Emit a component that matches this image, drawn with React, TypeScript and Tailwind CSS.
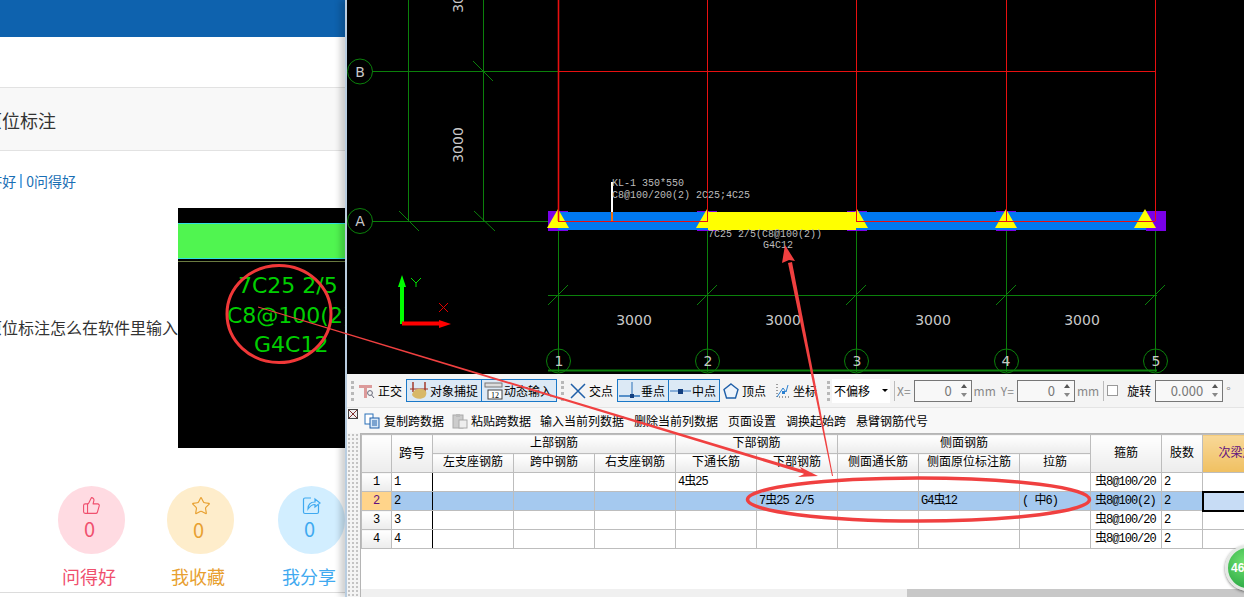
import { Star, ThumbsUp } from "lucide-react"

const cadGreen = "#0b800b"
const cadRed = "#e81010"
const axisX = [558, 707, 856, 1006, 1155]

function Grip() {
    return <div className="h-[20px] w-[3px] shrink-0 border-l-[3px] border-dotted border-[#b8b8b8]"></div>
}

function Triangle({ x }: { x: number }) {
    return <polygon points={`${x},209 ${x + 11},228 ${x - 11},228`} fill="#ffff00" />
}

function CadView() {
    return (
        <svg viewBox="347 0 897 374" className="block h-[374px] w-[897px] bg-black">
            <line x1="408.5" y1="0" x2="408.5" y2="221" stroke={cadGreen} />
            <line x1="483.5" y1="0" x2="483.5" y2="221" stroke={cadGreen} />
            <line x1="372" y1="71.5" x2="558" y2="71.5" stroke={cadGreen} />
            <line x1="372" y1="221.5" x2="558" y2="221.5" stroke={cadGreen} />
            <line x1="473" y1="61" x2="493" y2="81" stroke={cadGreen} />
            <line x1="399" y1="211" x2="419" y2="231" stroke={cadGreen} />
            <line x1="474" y1="211" x2="495" y2="231" stroke={cadGreen} />
            {axisX.map((x) => (
                <g key={x}>
                    <line x1={x + 0.5} y1="221" x2={x + 0.5} y2="372" stroke={cadGreen} />
                    <line x1={x - 10} y1="305" x2={x + 10} y2="285" stroke={cadGreen} />
                    <circle cx={x + 0.5} cy="361" r="12" fill="none" stroke={cadGreen} />
                </g>
            ))}
            <line x1="548" y1="295.5" x2="1157" y2="295.5" stroke={cadGreen} />
            <line x1="548" y1="370.5" x2="1157" y2="370.5" stroke={cadGreen} strokeWidth="2" />
            <circle cx="360" cy="71.5" r="12.5" fill="none" stroke={cadGreen} />
            <circle cx="360" cy="221" r="12.5" fill="none" stroke={cadGreen} />

            {/* columns sit under the beam, only the two end ones show */}
            <rect x="548" y="211" width="20" height="20" fill="#7a00e8" />
            <rect x="697" y="211" width="20" height="20" fill="#7a00e8" />
            <rect x="847" y="211" width="20" height="20" fill="#7a00e8" />
            <rect x="996" y="211" width="20" height="20" fill="#7a00e8" />
            <rect x="558" y="212" width="588" height="18" fill="#0078f0" />
            <rect x="1146" y="211" width="20" height="20" fill="#7a00e8" />
            <Triangle x={558} />
            <Triangle x={707} />
            <Triangle x={857} />
            <Triangle x={1006} />
            <Triangle x={1145} />

            {axisX.map((x, i) => (
                <line key={x} x1={x + 0.5} y1="0" x2={x + 0.5} y2="221" stroke={cadRed} strokeWidth={i === 0 ? 1.6 : 1} />
            ))}
            <line x1="558" y1="71.5" x2="1155" y2="71.5" stroke={cadRed} />
            <line x1="558" y1="221.5" x2="1155" y2="221.5" stroke={cadRed} />
            <rect x="708" y="212" width="148" height="18" fill="#ffff00" />

            <rect x="611" y="182" width="2" height="30" fill="#ffffff" />
            <rect x="611" y="212" width="2" height="9" fill="#f07010" />

            <g fontFamily="'Liberation Mono', monospace" fontSize="10" fill="#bcbcbc">
                <text x="612" y="186">KL-1 350*550</text>
                <text x="612" y="198">C8@100/200(2) 2C25;4C25</text>
                <text x="708" y="237">7C25 2/5(C8@100(2))</text>
                <text x="763" y="248">G4C12</text>
            </g>
            <g fontFamily="'DejaVu Sans', sans-serif" fontSize="14" fill="#c8c8c8" textAnchor="middle">
                <text x="634" y="325">3000</text>
                <text x="783" y="325">3000</text>
                <text x="933" y="325">3000</text>
                <text x="1082" y="325">3000</text>
                <text transform="translate(463,145) rotate(-90)">3000</text>
                <text transform="translate(463,-5) rotate(-90)">3000</text>
                <text x="360" y="77">B</text>
                <text x="360" y="226">A</text>
                <text x="559" y="366">1</text>
                <text x="708" y="366">2</text>
                <text x="857" y="366">3</text>
                <text x="1006" y="366">4</text>
                <text x="1156" y="366">5</text>
            </g>

            <line x1="402" y1="284" x2="402" y2="324" stroke="#00ff00" strokeWidth="4" />
            <polygon points="402,275 406,287 398,287" fill="#00ff00" />
            <path d="M411 278 L416 283 L421 278 M416 283 L416 287" fill="none" stroke="#00dd00" />
            <line x1="402" y1="323.5" x2="442" y2="323.5" stroke="#ff0000" strokeWidth="4" />
            <polygon points="451,324 439,320 439,328" fill="#ff0000" />
            <path d="M439 303 L448 312 M448 303 L439 312" fill="none" stroke="#e00000" />
        </svg>
    )
}

function ToolText({ children, className }: { children: string; className?: string }) {
    return <span className={`whitespace-nowrap text-[12px] leading-none text-black ${className ?? ""}`}>{children}</span>
}

function Spin({ value, width }: { value: string; width: string }) {
    return (
        <div className={`flex h-[22px] shrink-0 items-center border border-[#777] bg-[#f8f8f8] ${width}`}>
            <span className="flex-1 text-right text-[13px] text-[#777]">{value}</span>
            <div className="ml-[9px] mr-[4px] flex flex-col gap-[5px]">
                <div className="h-0 w-0 border-x-[3px] border-b-[4px] border-x-transparent border-b-[#555]"></div>
                <div className="h-0 w-0 border-x-[3px] border-t-[4px] border-x-transparent border-t-[#888]"></div>
            </div>
        </div>
    )
}

function SnapButton({ children, width }: { children: React.ReactNode; width: string }) {
    return (
        <div className={`-mr-[1px] flex h-[23px] shrink-0 items-center border border-[#1a78c8] bg-[#dce9f5] ${width}`}>
            {children}
        </div>
    )
}

function TopToolbar() {
    return (
        <div className="flex h-[33px] items-center bg-[#f4f4f4] pl-[4px] text-[12px]">
            <Grip />
            <svg width="18" height="18" viewBox="0 0 18 18" className="ml-[4px] shrink-0">
                <path d="M1 3 H14 V6 H9 V16 H6 V6 H1 Z" fill="#dc9a9a" />
                <circle cx="12" cy="11" r="2.4" fill="none" stroke="#667" />
                <line x1="13.6" y1="13" x2="16" y2="16" stroke="#667" />
            </svg>
            <ToolText className="ml-[2px]">正交</ToolText>
            <div className="ml-[4px] flex">
                <SnapButton width="w-[76px]">
                    <svg width="20" height="20" viewBox="0 0 20 20" className="ml-[2px] shrink-0">
                        <path d="M4 1 V11 M16 1 V11" stroke="#a03020" strokeWidth="1.4" />
                        <path d="M1 8 H19" stroke="#a03020" />
                        <path d="M3 14 C4 9 9 7 12 8 C17 8 19 12 16 16 C12 19 5 18 3 14 Z" fill="#d8b868" />
                    </svg>
                    <ToolText className="ml-[1px]">对象捕捉</ToolText>
                </SnapButton>
                <SnapButton width="w-[76px]">
                    <svg width="20" height="18" viewBox="0 0 20 18" className="ml-[2px] shrink-0">
                        <rect x="1" y="1" width="17" height="4" fill="#ddd" stroke="#777" />
                        <rect x="4" y="8" width="14" height="9" fill="#fff" stroke="#444" />
                        <text x="11" y="16" fontSize="8" textAnchor="middle" fill="#000" fontFamily="'Liberation Serif', serif">12</text>
                    </svg>
                    <ToolText>动态输入</ToolText>
                </SnapButton>
            </div>
            <div className="ml-[5px]"><Grip /></div>
            <svg width="16" height="16" viewBox="0 0 16 16" className="ml-[6px] shrink-0">
                <path d="M1 1 L15 15 M15 1 L1 15" stroke="#1f5fa8" strokeWidth="1.5" />
            </svg>
            <ToolText className="ml-[3px]">交点</ToolText>
            <div className="ml-[4px] flex">
                <SnapButton width="w-[52px]">
                    <svg width="21" height="18" viewBox="0 0 21 18" className="ml-[1px] shrink-0">
                        <path d="M0 14 H21" stroke="#2a70b8" strokeWidth="1.5" />
                        <path d="M13 0 V14" stroke="#2a70b8" />
                        <rect x="11" y="12" width="4" height="4" fill="#123f80" />
                    </svg>
                    <ToolText className="ml-[1px]">垂点</ToolText>
                </SnapButton>
                <SnapButton width="w-[52px]">
                    <svg width="21" height="10" viewBox="0 0 21 10" className="ml-[1px] shrink-0">
                        <path d="M0 5 H21" stroke="#6a9ad0" strokeWidth="1.5" />
                        <rect x="8" y="3" width="5" height="5" fill="#123f80" />
                    </svg>
                    <ToolText className="ml-[1px]">中点</ToolText>
                </SnapButton>
            </div>
            <svg width="16" height="16" viewBox="0 0 16 16" className="ml-[4px] shrink-0">
                <polygon points="8,1 15,6.5 12.5,15 3.5,15 1,6.5" fill="#eef4fb" stroke="#1f5fa8" strokeWidth="1.4" />
            </svg>
            <ToolText className="ml-[3px]">顶点</ToolText>
            <svg width="18" height="18" viewBox="0 0 18 18" className="ml-[6px] shrink-0">
                <path d="M5 2 V15 H17" stroke="#444" strokeDasharray="1 2" fill="none" />
                <path d="M5 15 L11 6 L14 10 L16 3" stroke="#2a80d0" fill="none" />
                <rect x="10" y="9" width="3" height="3" fill="#2a80d0" />
            </svg>
            <ToolText className="ml-[3px]">坐标</ToolText>
            <div className="ml-[10px]"><Grip /></div>
            <div className="ml-[2px] flex h-[24px] w-[58px] shrink-0 items-center justify-between bg-white pl-[2px] pr-[2px]">
                <ToolText>不偏移</ToolText>
                <div className="h-0 w-0 border-x-[3px] border-t-[3px] border-x-transparent border-t-black"></div>
            </div>
            <div className="ml-[4px] h-[20px] w-[1px] shrink-0 bg-[#bbb]"></div>
            <span className="ml-[2px] text-[#888]">X=</span>
            <div className="ml-[3px]"><Spin value="0" width="w-[58px]" /></div>
            <span className="ml-[2px] text-[#888]">mm</span>
            <span className="ml-[5px] text-[#888]">Y=</span>
            <div className="ml-[3px]"><Spin value="0" width="w-[58px]" /></div>
            <span className="ml-[2px] text-[#888]">mm</span>
            <div className="ml-[4px] h-[20px] w-[1px] shrink-0 bg-[#bbb]"></div>
            <div className="ml-[3px] h-[11px] w-[11px] shrink-0 border border-[#999] bg-white"></div>
            <ToolText className="ml-[9px]">旋转</ToolText>
            <div className="ml-[4px]"><Spin value="0.000" width="w-[68px]" /></div>
            <span className="ml-[3px] text-[#888]">°</span>
        </div>
    )
}

function SecondToolbar() {
    return (
        <div className="flex h-[26px] items-center border-t border-[#e4e4e4] bg-[#f8f8f8] pl-[1px]">
            <div className="mb-[14px] flex h-[10px] w-[10px] shrink-0 items-center justify-center border border-[#444] bg-[#eee]">
                <svg width="8" height="8" viewBox="0 0 8 8"><path d="M0 0 L8 8 M8 0 L0 8" stroke="#803030" /></svg>
            </div>
            <svg width="16" height="16" viewBox="0 0 16 16" className="ml-[6px] shrink-0">
                <rect x="1" y="1" width="8" height="10" fill="#fff" stroke="#2a70b8" />
                <rect x="6" y="5" width="9" height="10" fill="#d8e8f8" stroke="#1f5fa8" />
                <path d="M8 8 H13 M8 10 H13 M8 12 H13" stroke="#1f5fa8" />
            </svg>
            <ToolText className="ml-[4px]">复制跨数据</ToolText>
            <svg width="16" height="16" viewBox="0 0 16 16" className="ml-[8px] shrink-0">
                <rect x="1" y="2" width="10" height="13" fill="#ccc" stroke="#aaa" />
                <rect x="4" y="1" width="4" height="3" fill="#bbb" />
                <rect x="7" y="7" width="8" height="8" fill="#eee" stroke="#aaa" />
            </svg>
            <ToolText className="ml-[3px] text-[#9a9a9a]">粘贴跨数据</ToolText>
            <ToolText className="ml-[9px]">输入当前列数据</ToolText>
            <ToolText className="ml-[10px]">删除当前列数据</ToolText>
            <ToolText className="ml-[10px]">页面设置</ToolText>
            <ToolText className="ml-[10px]">调换起始跨</ToolText>
            <ToolText className="ml-[10px]">悬臂钢筋代号</ToolText>
        </div>
    )
}

type Row = {
    no: string
    bottomLong?: string
    bottom?: string
    sideOrigin?: string
    tie?: string
    stirrup: string
}

const rows: Row[] = [
    { no: "1", bottomLong: "4虫25", stirrup: "虫8@100/20" },
    { no: "2", bottom: "7虫25 2/5", sideOrigin: "G4虫12", tie: "( 中6)", stirrup: "虫8@100(2)" },
    { no: "3", stirrup: "虫8@100/20" },
    { no: "4", stirrup: "虫8@100/20" },
]

const colWidths = ["w-[30px]", "w-[41px]", "w-[81px]", "w-[81px]", "w-[81px]", "w-[81px]", "w-[81px]", "w-[81px]", "w-[101px]", "w-[71px]", "w-[71px]", "w-[41px]", "w-[80px]"]

const headCell = "border border-[#bdbdbd] bg-gradient-to-b from-white to-[#ececec] p-0 text-center text-[12px] font-normal leading-none text-black whitespace-nowrap"

function RebarTable() {
    return (
        <div className="flex min-h-0 flex-1 bg-[radial-gradient(#c4c4c4_1px,transparent_1px)] bg-[length:4px_4px]">
            <div className="ml-[13px] flex min-w-0 flex-1 flex-col overflow-hidden border-l border-t border-[#b5b5b5] bg-white">
                <div className="min-h-0 flex-1 overflow-hidden">
                    <table className="w-[921px] table-fixed border-collapse">
                        <colgroup>
                            {colWidths.map((w, i) => <col key={i} className={w} />)}
                        </colgroup>
                        <thead>
                            <tr className="h-[19px]">
                                <th rowSpan={2} className={headCell}></th>
                                <th rowSpan={2} className={`${headCell} text-[13px]`}>跨号</th>
                                <th colSpan={3} className={headCell}>上部钢筋</th>
                                <th colSpan={2} className={headCell}>下部钢筋</th>
                                <th colSpan={3} className={headCell}>侧面钢筋</th>
                                <th rowSpan={2} className={headCell}>箍筋</th>
                                <th rowSpan={2} className={headCell}>肢数</th>
                                <th rowSpan={2} className="border border-[#bdbdbd] bg-gradient-to-b from-[#f8d898] to-[#f0c060] p-0 text-center text-[12px] font-normal text-[#601080]">次梁加筋</th>
                            </tr>
                            <tr className="h-[19px]">
                                <th className={headCell}>左支座钢筋</th>
                                <th className={headCell}>跨中钢筋</th>
                                <th className={headCell}>右支座钢筋</th>
                                <th className={headCell}>下通长筋</th>
                                <th className={headCell}>下部钢筋</th>
                                <th className={headCell}>侧面通长筋</th>
                                <th className={headCell}>侧面原位标注筋</th>
                                <th className={headCell}>拉筋</th>
                            </tr>
                        </thead>
                        <tbody>
                            {rows.map((row) => {
                                const active = row.no === "2"
                                const td = `border border-[#bdbdbd] px-[2px] py-0 text-[12px] leading-none tracking-[-1px] text-black whitespace-pre overflow-hidden ${active ? "bg-[#a5c9ef]" : "bg-white"}`
                                return (
                                    <tr key={row.no} className="h-[19px]">
                                        <td className={`border border-[#bdbdbd] p-0 text-center text-[12px] leading-none ${active ? "bg-[#ffd48a] text-[#601080]" : "bg-gradient-to-b from-white to-[#ececec] text-black"}`}>{row.no}</td>
                                        <td className={`${td} border-r-black`}>{row.no}</td>
                                        <td className={`${td} border-l-black`}></td>
                                        <td className={td}></td>
                                        <td className={td}></td>
                                        <td className={td}>{row.bottomLong}</td>
                                        <td className={td}>{row.bottom}</td>
                                        <td className={td}></td>
                                        <td className={td}>{row.sideOrigin}</td>
                                        <td className={td}>{row.tie}</td>
                                        <td className={`${td} pl-[4px]`}>{row.stirrup}</td>
                                        <td className={td}>2</td>
                                        <td className={active ? "border-2 border-black bg-[#c7dcf5] p-0" : "border border-[#bdbdbd] bg-white p-0"}></td>
                                    </tr>
                                )
                            })}
                        </tbody>
                    </table>
                </div>
                <div className="flex h-[8px] shrink-0 bg-[#f0f0f0]">
                    <div className="ml-[546px] flex-1 bg-[#c8c8c8]"></div>
                </div>
            </div>
        </div>
    )
}

function Stat({ bg, color, label, icon, className }: { bg: string; color: string; label: string; icon: React.ReactNode; className: string }) {
    return (
        <div className={`flex w-[67px] shrink-0 flex-col items-center ${className} ${color}`}>
            <div className={`flex h-[68px] w-[67px] flex-col items-center rounded-full pt-[10px] ${bg}`}>
                {icon}
                <span className="mr-[4px] text-[20px] leading-[28px]">0</span>
            </div>
            <span className="mr-[5px] mt-[11px] whitespace-nowrap text-[18px] leading-[22px]">{label}</span>
        </div>
    )
}

function ArticlePane() {
    return (
        <aside className="w-[345px] shrink-0 overflow-hidden bg-white font-['Noto_Sans_CJK_SC',sans-serif]">
            <div className="h-[37px] bg-[#0e62ae]"></div>
            <div className="h-[50px]"></div>
            <div className="flex h-[64px] items-center border-y border-[#e2e2e2] bg-[#f8f8f8] pt-[2px]">
                <div className="flex w-[56px] justify-end overflow-hidden">
                    <span className="whitespace-nowrap text-[18px] text-[#333]">原位标注</span>
                </div>
            </div>
            <div className="mt-[20px] flex h-[20px] w-[76px] items-center justify-end overflow-hidden">
                <span className="flex items-center whitespace-nowrap text-[14px] text-[#1a6fb5]">
                    0回答好
                    <span className="mx-[4px] h-[14px] w-[2px] bg-[#6ab0e8]"></span>
                    0问得好
                </span>
            </div>
            <div className="mt-[17px] flex h-[240px]">
                <div className="flex w-[178px] shrink-0 justify-end overflow-hidden pt-[108px]">
                    <span className="whitespace-nowrap text-[16px] leading-[22px] text-[#333]">原位标注怎么在软件里输入</span>
                </div>
                <svg viewBox="178 208 167 240" className="h-[240px] w-[167px] bg-black">
                    <rect x="178" y="223" width="167" height="35" fill="#50f550" />
                    <rect x="178" y="223" width="167" height="1" fill="#30e0e0" />
                    <rect x="178" y="258" width="167" height="1" fill="#30e0e0" />
                    <rect x="178" y="261" width="167" height="1" fill="#6a7a40" />
                    <g fontFamily="'DejaVu Sans', sans-serif" fontSize="22" fill="#00cf00">
                        <text x="238" y="293">7C25 2/5</text>
                        <text x="227" y="323">C8@100(2)</text>
                        <text x="254" y="352">G4C12</text>
                    </g>
                </svg>
            </div>
            <div className="mt-[38px] flex">
                <Stat bg="bg-[#ffdbe2]" color="text-[#f0506e]" label="问得好" className="ml-[58px]" icon={<ThumbsUp size={19} strokeWidth={1.4} />} />
                <Stat bg="bg-[#feedcb]" color="text-[#e8a030]" label="我收藏" className="ml-[42px]" icon={<Star size={20} strokeWidth={1.4} />} />
                <Stat
                    bg="bg-[#d2eeff]"
                    color="text-[#3fa9f0]"
                    label="我分享"
                    className="ml-[44px]"
                    icon={
                        <svg width="19" height="19" viewBox="0 0 19 19" fill="none" stroke="currentColor" strokeWidth="1.2">
                            <path d="M9 2 H3 Q1.5 2 1.5 3.5 V16 Q1.5 17.5 3 17.5 H15 Q16.5 17.5 16.5 16 V9" />
                            <path d="M6 13 C6 8 9 6 13 6 V3 L18 7 L13 11 V8.5 C10 8.5 8 10 6 13 Z" />
                        </svg>
                    }
                />
            </div>
            <div className="mt-[5px] h-[1px] bg-[#dcdcdc]"></div>
        </aside>
    )
}

function Annotations() {
    return (
        <svg viewBox="0 0 1244 597" className="pointer-events-none absolute inset-0 h-[597px] w-[1244px]">
            <ellipse cx="279" cy="314" rx="52" ry="48.5" fill="none" stroke="#f03838" strokeWidth="3" />
            <polygon points="258,306.5 806,471 805,474 258,307.5" fill="#f04040" />
            <polygon points="818,476 800,467 804,474 798,477" fill="#f04040" />
            <polygon points="833,476 792,262 788,263 832,476" fill="#f04040" />
            <polygon points="785,245 795,261 789,260 782,263" fill="#f04040" />
            <ellipse cx="918.5" cy="499.5" rx="171" ry="21.5" fill="none" stroke="#f04040" strokeWidth="3.5" />
        </svg>
    )
}

function App() {
    return (
        <div className="relative flex h-[597px] w-[1244px] overflow-hidden bg-white font-['Noto_Sans_CJK_SC',sans-serif]">
            <ArticlePane />
            <main className="flex min-w-0 flex-1 flex-col border-l-2 border-[#b9cde0] bg-[#f4f4f4] font-['Liberation_Mono','Noto_Sans_CJK_SC',monospace] shadow-[-5px_0_6px_rgba(0,0,0,0.18)]">
                <CadView />
                <div className="font-['Noto_Sans_CJK_SC',sans-serif]">
                    <TopToolbar />
                    <SecondToolbar />
                </div>
                <RebarTable />
            </main>
            <Annotations />
            <div className="absolute left-[1225px] top-[545px] flex h-[46px] w-[46px] items-center rounded-full border-[3px] border-[#e4e8e4] bg-[radial-gradient(circle_at_40%_35%,#70e070,#189a38)] pl-[3px] font-['Liberation_Sans',sans-serif] text-[12px] font-bold text-white shadow-[0_1px_3px_rgba(0,0,0,0.5)]">
                46
            </div>
        </div>
    )
}

export default App
